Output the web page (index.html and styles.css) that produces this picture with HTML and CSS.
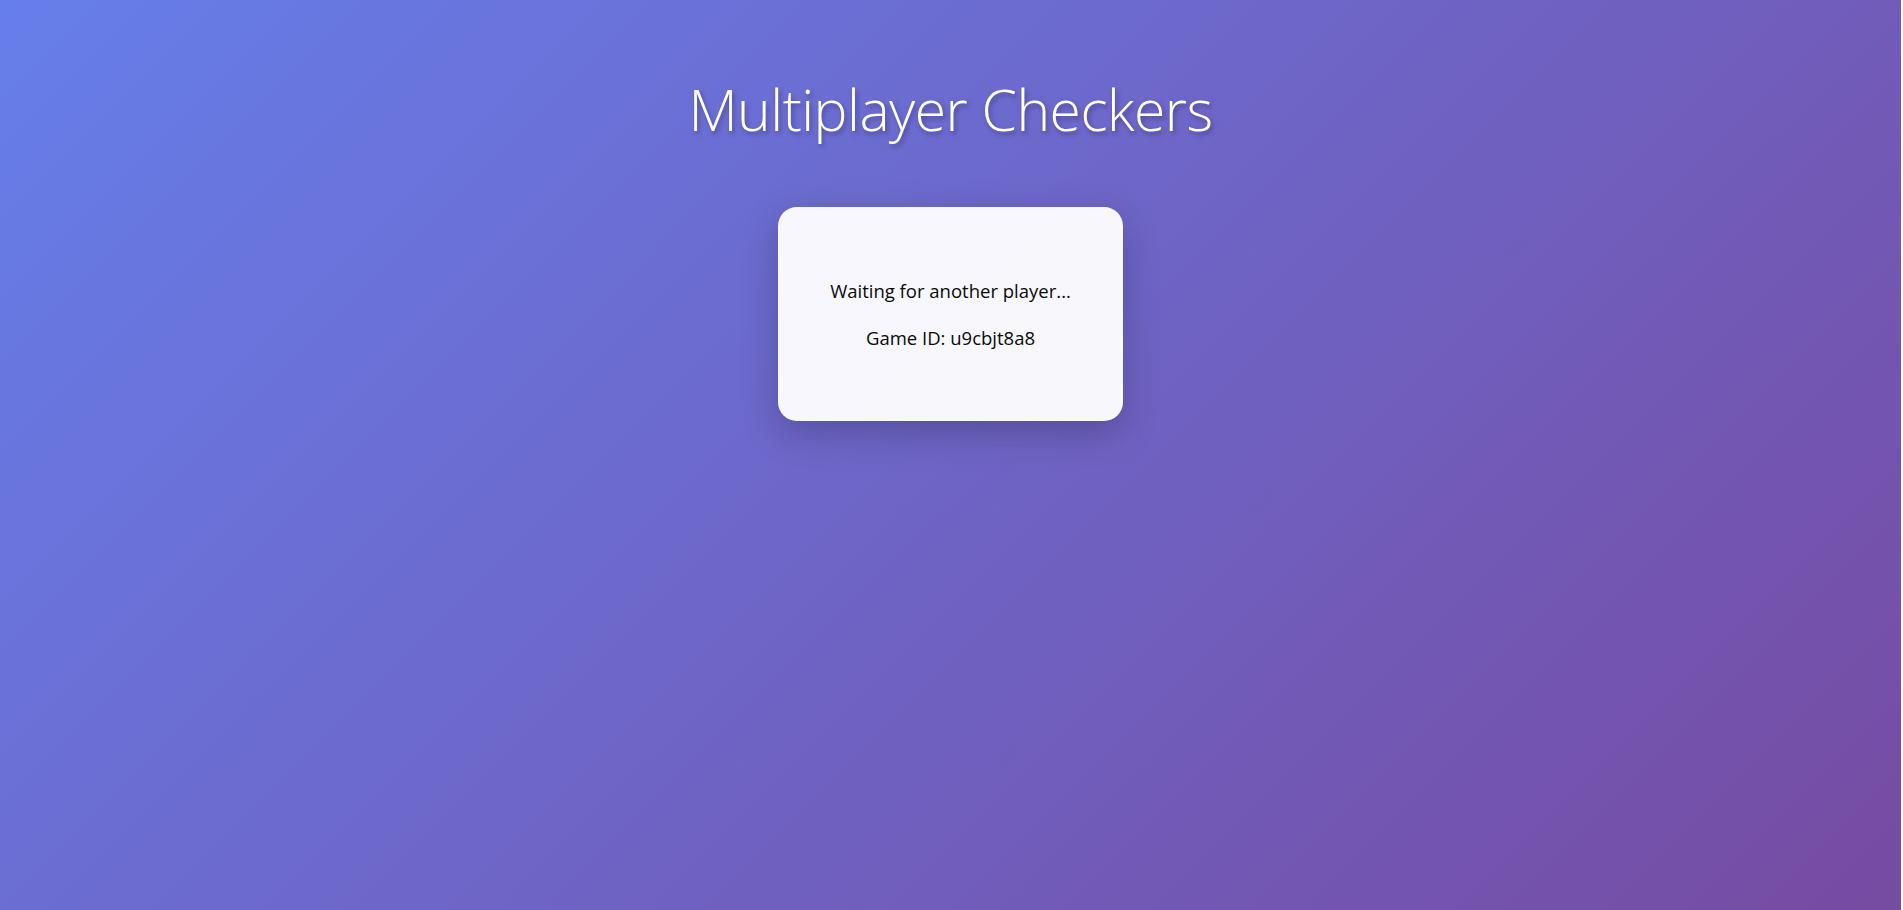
FILE: index.html
```html
<!DOCTYPE html>
<html lang="en">
<head>
<meta charset="utf-8">
<title>Multiplayer Checkers</title>
<link rel="stylesheet" href="styles.css">
</head>
<body>
<div class="app">
  <h1 class="title">Multiplayer Checkers</h1>
  <div class="waiting-card">
    <p class="waiting-text">Waiting for another player...</p>
    <p class="waiting-text">Game ID: u9cbjt8a8</p>
  </div>
</div>
</body>
</html>
```

FILE: styles.css
```css
html {
  background: #ffffff;
  height: 100%;
}
body {
  margin: 0 2px 0 0;
  min-height: 100%;
  height: 910px;
  background: linear-gradient(135deg, #667eea 0%, #764ba2 100%);
  font-family: "Open Sans", "Noto Sans", sans-serif;
  color: #111;
}
.app {
  display: flex;
  flex-direction: column;
  align-items: center;
  padding-top: 67px;
}
.title {
  margin: 0;
  font-family: "Open Sans", "Noto Sans", sans-serif;
  font-weight: 300;
  font-size: 57px;
  line-height: 84px;
  color: #ffffff;
  text-shadow: 2px 3px 5px rgba(0, 0, 0, 0.3);
  letter-spacing: -0.5px;
}
.waiting-card {
  margin-top: 56px;
  width: 345px;
  box-sizing: border-box;
  padding: 50px 20px;
  background: rgba(255, 255, 255, 0.95);
  border-radius: 19px;
  box-shadow: 0 12px 36px rgba(0, 0, 0, 0.22);
  text-align: center;
}
.waiting-text {
  margin: 20px 0;
  font-size: 18.5px;
  line-height: 27px;
  color: #0a0a0a;
}
```
